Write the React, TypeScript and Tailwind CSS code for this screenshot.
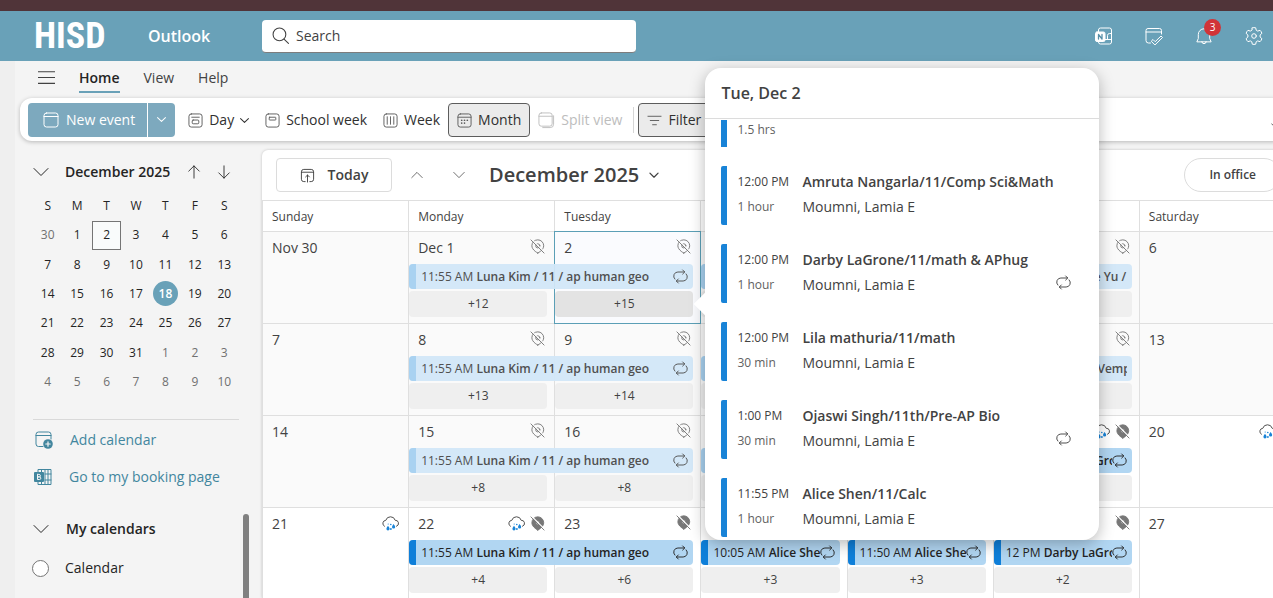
import type { ReactNode } from 'react';
import clsx from 'clsx';

/* ---------- icons ---------- */

interface IconProps {
  className?: string;
  children: ReactNode;
  box?: number;
}

function Icon({ className = 'size-4', children, box = 16 }: IconProps) {
  return (
    <svg
      viewBox={`0 0 ${box} ${box}`}
      className={clsx('shrink-0', className)}
      fill="none"
      stroke="currentColor"
      strokeWidth="1"
      strokeLinecap="round"
      strokeLinejoin="round"
      aria-hidden="true"
    >
      {children}
    </svg>
  );
}

const ChevronDown = ({ className }: { className?: string }) => (
  <Icon className={className}><path d="M1 4.5l7 7 7-7" /></Icon>
);

const ChevronUp = ({ className }: { className?: string }) => (
  <Icon className={className}><path d="M1 11.5l7-7 7 7" /></Icon>
);

// Chevron for small sizes, with a heavier line.
const SmallChevron = () => (
  <Icon className="size-[9px]"><path d="M1 4.5l7 7 7-7" strokeWidth="1.8" /></Icon>
);

const CalendarFrame = () => (
  <>
    <rect x="1" y="1" width="14" height="14" rx="2.5" />
    <path d="M1 4.5h14" />
  </>
);

const TOOL_ICON = 'size-[15px] text-[#5c5c5c]';

const DayIcon = () => (
  <Icon className={TOOL_ICON}>
    <rect x="1" y="1" width="14" height="14" rx="2.5" />
    <path d="M4 4.5h8" />
    <rect x="4.5" y="7.5" width="7" height="4" rx="1" />
  </Icon>
);

const SchoolWeekIcon = () => (
  <Icon className={TOOL_ICON}>
    <rect x="1" y="1" width="14" height="14" rx="2.5" />
    <rect x="4.5" y="4.5" width="7" height="3" rx="0.5" />
  </Icon>
);

const WeekIcon = () => (
  <Icon className={TOOL_ICON}>
    <rect x="1" y="1" width="14" height="14" rx="2.5" />
    <path d="M4.5 4v8M8 4v8M11.5 4v8" />
  </Icon>
);

const MonthIcon = () => (
  <Icon className={TOOL_ICON}>
    <CalendarFrame />
    <g fill="currentColor" stroke="none">
      <circle cx="5" cy="10.7" r="0.9" />
      <circle cx="8" cy="7.7" r="0.9" />
      <circle cx="8" cy="10.7" r="0.9" />
      <circle cx="11" cy="7.7" r="0.9" />
      <circle cx="5" cy="7.7" r="0.9" />
    </g>
  </Icon>
);

const SplitIcon = () => (
  <Icon className="size-[17px]" box={18}>
    <rect x="1" y="1" width="14" height="14" rx="2.5" />
    <path d="M1 4.5h14M16.5 4v9a3.5 3.5 0 0 1-3.5 3.5H5" />
  </Icon>
);

const FilterIcon = () => (
  <Icon className="size-[15px] text-[#5c5c5c]"><path d="M1 3.5h14M3.5 8h9M6 12.5h4" /></Icon>
);

const TodayIcon = () => (
  <Icon className="size-[15px]">
    <path d="M5.5 14.5H4A2.5 2.5 0 0 1 1.5 12V4A2.5 2.5 0 0 1 4 1.5h8A2.5 2.5 0 0 1 14.5 4v8a2.5 2.5 0 0 1-2.5 2.5h-1.5M1.5 4.5h13" />
    <path d="M8 15V7.5M6 9.5l2-2 2 2" />
  </Icon>
);

const RepeatIcon = ({ className }: { className?: string }) => (
  <Icon className={clsx('size-[15px]', className)}>
    <path d="M10.300 1l2.200 2.200-2.200 2.200M12.300 3.200H5.200A4.500 4.500 0 0 0 2 10.800" />
    <path d="M5.700 15l-2.200-2.200 2.200-2.200M3.700 12.800h7.100A4.500 4.500 0 0 0 14 5.200" />
  </Icon>
);

// Location switched off; filled for days that are still to come.
const PinOffIcon = ({ filled }: { filled?: boolean }) => (
  <Icon className="size-[15px] text-[#777777]">
    <path
      d="M8.300 15q-1.500-.8-2.700-1.800C3.200 11.300 2 9.300 2 7.200a6.300 6.300 0 0 1 12.600 0c0 2.100-1.200 4.100-3.600 6Q9.800 14.200 8.300 15z"
      fill={filled ? 'currentColor' : 'none'}
    />
    <circle cx="8.300" cy="7.300" r="2.200" fill={filled ? '#c8c8c8' : 'none'} />
    <path d="M2.500 1l13 13" stroke={filled ? '#fff' : '#fafafa'} strokeWidth="1.300" />
    <path d="M1 1l14 14" />
  </Icon>
);

const RainIcon = () => (
  <Icon className="size-[17px] text-[#505050]" box={17}>
    <path d="M2.500 11.300A3.200 3.200 0 0 1 3.800 5.300a4.900 4.900 0 0 1 9.400 0 3.100 3.100 0 0 1 1.300 6" />
    <g fill="#1883d7" stroke="none">
      <path d="M6 10.800q1.600 2 1.600 3a1.600 1.600 0 0 1-3.200 0q0-1 1.600-3zM11.600 9q1.600 2 1.600 3a1.600 1.600 0 0 1-3.200 0q0-1 1.600-3z" />
      <circle cx="8.800" cy="9.500" r="0.800" />
      <circle cx="8.900" cy="14" r="0.900" />
      <circle cx="6.200" cy="9" r="0.600" />
    </g>
  </Icon>
);

/* ---------- top bar ---------- */

function TopBar() {
  return (
    <header className="flex h-[50px] items-center bg-[#69a1b8] text-white">
      <a href="#home" aria-label="HISD home" className="ml-[34px] w-[114px] font-['Liberation_Sans_Narrow','Roboto_Condensed','Open_Sans',sans-serif] text-4xl leading-[50px] font-bold">
        HISD
      </a>
      <a href="#outlook" className="w-[114px] text-base font-semibold">Outlook</a>
      <label className="flex h-[33px] w-[374px] items-center gap-[7px] rounded border-b border-[#7d7d7d] bg-white pl-[10px] text-[#424242]">
        <Icon className="size-[17px]">
          <circle cx="7" cy="7" r="6" />
          <path d="M11.300 11.300L15.500 15.500" />
        </Icon>
        <input
          type="search"
          aria-label="Search"
          placeholder="Search"
          className="min-w-0 flex-1 bg-transparent text-sm outline-none placeholder:text-[#424242]"
        />
      </label>
      <nav className="ml-auto flex items-center gap-8 pr-[10px]">
        <button type="button" aria-label="OneNote feed">
          <Icon className="size-[18px]" box={18}>
            <path d="M3.500 5V3A2 2 0 0 1 5.500 1h9A2 2 0 0 1 16.500 3v12a2 2 0 0 1-2 2h-9a2 2 0 0 1-2-2v-1M9 12.500h7.500M16.500 6.500h-2a2 2 0 0 0-2 2v4" />
            <rect x="0.500" y="5" width="9.500" height="9.500" rx="1.500" fill="#fff" />
            <path d="M3.500 12V7.500l3.500 4.500V7.500" stroke="#5890a8" strokeWidth="1.300" />
          </Icon>
        </button>
        <button type="button" aria-label="My day">
          <Icon className="size-[18px]" box={18}>
            <path d="M5.500 16H3.500A2.500 2.500 0 0 1 1 13.500v-10A2 2 0 0 1 3 1.500h11.500A2 2 0 0 1 16.500 3.500V7M1 5h15.500" />
            <path d="M6.500 14l1.500-1.500 2.200 2.200 5.800-5.700 1.500 1.500-7.300 7.200z" />
          </Icon>
        </button>
        <button type="button" aria-label="Notifications" className="relative">
          <Icon className="size-[18px]" box={18}>
            <path d="M2 14.500l1.300-3V7.500a5.700 5.700 0 0 1 11.400 0v4l1.300 3zM6.800 14.500a2.200 2.200 0 0 0 4.400 0" />
          </Icon>
          <span className="absolute -top-2 left-[9px] flex size-[17px] items-center justify-center rounded-full bg-[#d13438] text-[10px]">3</span>
        </button>
        <button type="button" aria-label="Settings">
          <Icon className="size-[18px]" box={18}>
            <circle cx="9" cy="9" r="2.300" />
            <path d="M7.300 .8Q9 .4 10.700 .8l.5 2.400 1.500.9 2.300-.8q1.400 1.300 1.900 3l-1.800 1.700v2l1.800 1.700q-.5 1.700-1.900 3l-2.300-.8-1.500.9-.5 2.400Q9 17.600 7.300 17.200l-.5-2.400-1.500-.9-2.300.8q-1.400-1.300-1.900-3l1.800-1.700V8L1.100 6.300q.5-1.700 1.900-3l2.300.8 1.500-.9z" />
          </Icon>
        </button>
      </nav>
    </header>
  );
}

/* ---------- ribbon ---------- */

interface ToolButtonProps {
  icon: ReactNode;
  label: string;
  active?: boolean;
  disabled?: boolean;
  menu?: boolean;
}

function ToolButton({ icon, label, active, disabled, menu }: ToolButtonProps) {
  return (
    <button
      type="button"
      disabled={disabled}
      className={clsx(
        'flex h-[34px] items-center gap-[6px] px-2 pt-px whitespace-nowrap',
        active && 'rounded border border-[#5c5c5c] bg-[#ebebeb]',
        disabled ? 'text-[#bdbdbd]' : 'text-[#303030]',
      )}
    >
      {icon}
      {label}
      {menu && <SmallChevron />}
    </button>
  );
}

function Ribbon() {
  return (
    <>
      <nav className="flex h-[37px] items-start gap-6 pl-[23px] text-sm text-[#424242]">
        <button type="button" aria-label="Toggle navigation" className="flex h-8 items-center">
          <Icon className="size-[17px]"><path d="M0 2.500h16M0 8h16M0 13.500h16" /></Icon>
        </button>
        <a href="#home" className="flex h-8 items-center border-b-2 border-[#69a1b8] pt-1 font-semibold text-[#242424]">Home</a>
        <a href="#view" className="flex h-8 items-center border-b-2 border-transparent pt-1">View</a>
        <a href="#help" className="flex h-8 items-center border-b-2 border-transparent pt-1">Help</a>
      </nav>
      <div className="-mr-3 ml-[5px] flex h-[43px] items-center rounded-xl bg-white pr-1 pl-2 text-sm shadow-[0_1px_4px_rgba(0,0,0,0.25)]">
        <div className="mr-[5px] flex h-[34px] overflow-hidden rounded bg-[#7da9be] text-white">
          <button type="button" className="flex items-center gap-[7px] pt-px pr-[12px] pl-[15px] whitespace-nowrap">
            <Icon><CalendarFrame /></Icon>
            New event
          </button>
          <button type="button" aria-label="More new items" className="flex w-7 items-center justify-center border-l border-white">
            <SmallChevron />
          </button>
        </div>
        <ToolButton icon={<DayIcon />} label="Day" menu />
        <ToolButton icon={<SchoolWeekIcon />} label="School week" />
        <ToolButton icon={<WeekIcon />} label="Week" />
        <ToolButton icon={<MonthIcon />} label="Month" active />
        <ToolButton icon={<SplitIcon />} label="Split view" disabled />
        <span className="mr-1 ml-[3px] h-[26px] w-px bg-[#d6d6d6]" />
        <ToolButton icon={<FilterIcon />} label="Filter" active menu />
        <button type="button" aria-label="Ribbon options" className="mt-3 ml-auto">
          <ChevronDown className="size-[10px]" />
        </button>
      </div>
    </>
  );
}

/* ---------- sidebar ---------- */

const WEEK_LETTERS = ['S', 'M', 'T', 'W', 'T', 'F', 'S'];
const MINI_DAYS = [30, ...Array.from({ length: 31 }, (_, i) => i + 1), ...Array.from({ length: 10 }, (_, i) => i + 1)];

function Sidebar() {
  return (
    <aside className="relative w-[247px] shrink-0 pr-[23px] pl-[18px] text-[#242424]">
      <div className="flex h-[41px] items-center pt-[2px]">
        <button type="button" aria-label="Collapse calendar"><ChevronDown className="size-4" /></button>
        <h2 className="ml-4 text-sm font-semibold">December 2025</h2>
        <button type="button" aria-label="Previous month" className="ml-auto">
          <Icon className="size-[14px]"><path d="M8 15V1M2 7l6-6 6 6" /></Icon>
        </button>
        <button type="button" aria-label="Next month" className="mr-2 ml-4">
          <Icon className="size-[14px]"><path d="M8 1v14M2 9l6 6 6-6" /></Icon>
        </button>
      </div>
      <div className="grid h-[206px] grid-cols-7 grid-rows-7 place-items-center text-xs">
        {WEEK_LETTERS.map((d, i) => <span key={i}>{d}</span>)}
        {MINI_DAYS.map((day, i) => (
          <button
            key={i}
            type="button"
            className={clsx(
              'flex items-center justify-center',
              i === 2 ? 'size-[29px] border border-[#757575] bg-[#f9fbfb]' : 'size-[25px]',
              i === 18 && 'rounded-full bg-[#69a1b8] font-semibold text-white',
              (i === 0 || i > 31) && 'text-[#707070]',
            )}
          >
            {day}
          </button>
        ))}
      </div>
      <div className="mt-[22px] border-t border-[#d9d9d9] text-sm text-[#42869e]">
        <button type="button" className="flex h-10 items-center gap-[17px] pl-[2px]">
          <Icon className="size-[18px]" box={18}>
            <path d="M8 15.500H3.500A2.500 2.500 0 0 1 1 13V3.500A2.500 2.500 0 0 1 3.500 1h10A2.500 2.500 0 0 1 16 3.500V8M1 4.500h15" />
            <circle cx="13" cy="13" r="4.800" fill="currentColor" stroke="none" />
            <path d="M13 10.800v4.400M10.800 13h4.400" stroke="#f4f4f4" strokeWidth="1.200" />
          </Icon>
          Add calendar
        </button>
        <a href="#booking" className="flex h-[34px] items-center gap-[17px] pl-px">
          <Icon className="size-[18px]" box={18}>
            <path d="M4 4V1.500h13v15H4V14M11 1.500v15M14 1.500v15M7.500 1.500V4M7.500 14v2.500M11 6h6M11 12h6" />
            <rect x="0" y="4" width="10" height="10" rx="1" fill="currentColor" stroke="none" />
            <path d="M3.500 6.500v5h2a1.300 1.300 0 0 0 0-2.600h-2 1.800a1.200 1.200 0 0 0 0-2.400z" stroke="#f4f4f4" />
          </Icon>
          Go to my booking page
        </a>
      </div>
      <div className="mt-[15px] text-sm">
        <h3 className="flex h-10 items-center gap-[17px] font-semibold">
          <button type="button" aria-label="Collapse my calendars"><ChevronDown className="size-4" /></button>
          My calendars
        </h3>
        <label className="flex h-[38px] items-center gap-4">
          <input type="checkbox" className="-ml-px size-[17px] appearance-none rounded-full border border-[#757575] bg-white" />
          Calendar
        </label>
      </div>
      <div className="absolute top-[364px] right-[13px] bottom-0 w-[6px] rounded-t-full bg-[#808080]" />
    </aside>
  );
}

/* ---------- month grid ---------- */

const WEEKDAYS = ['Sunday', 'Monday', 'Tuesday', 'Wednesday', 'Thursday', 'Friday', 'Saturday'];
const COL_START = ['col-start-1', 'col-start-2', 'col-start-3', 'col-start-4', 'col-start-5', 'col-start-6', 'col-start-7'];

interface CalendarEvent {
  col: number;
  wide?: boolean;
  time: string;
  title: string;
  repeat?: boolean;
  upcoming?: boolean;
}

interface Week {
  labels: string[];
  rain: number[];
  upcomingFrom: number;
  events: CalendarEvent[];
  more: number[];
}

const luna = { col: 1, wide: true, time: '11:55 AM', title: 'Luna Kim / 11 / ap human geo', repeat: true };
const alice = { col: 3, time: '10:05 AM', title: 'Alice Shen/11/Calc', repeat: true };
const darby = { col: 5, time: '12 PM', title: 'Darby LaGrone/11', repeat: true };

const WEEKS: Week[] = [
  {
    labels: ['Nov 30', 'Dec 1', '2', '3', '4', '5', '6'],
    rain: [],
    upcomingFrom: 7,
    events: [luna, { ...alice, wide: true }, { col: 5, time: '12 PM', title: 'Catherine Yu / 11' }],
    more: [12, 15, 12, 14, 9],
  },
  {
    labels: ['7', '8', '9', '10', '11', '12', '13'],
    rain: [],
    upcomingFrom: 7,
    events: [luna, { ...alice, wide: true }, { col: 5, time: '12 PM', title: 'Srivithya Vempati' }],
    more: [13, 14, 12, 10, 9],
  },
  {
    labels: ['14', '15', '16', '17', '18', '19', '20'],
    rain: [5, 6],
    upcomingFrom: 4,
    events: [luna, { ...alice, wide: true }, { ...darby, upcoming: true }],
    more: [8, 8, 6, 5, 4],
  },
  {
    labels: ['21', '22', '23', '24', '25', '26', '27'],
    rain: [0, 1],
    upcomingFrom: 0,
    events: [
      { ...luna, upcoming: true },
      { ...alice, upcoming: true },
      { col: 4, time: '11:50 AM', title: 'Alice Shen/11/Calc', repeat: true, upcoming: true },
      { ...darby, upcoming: true },
    ],
    more: [4, 6, 3, 3, 2],
  },
];

function EventBar({ event }: { event: CalendarEvent }) {
  const { col, wide, time, title, repeat, upcoming } = event;
  return (
    <button
      type="button"
      className={clsx(
        'z-10 row-start-2 mr-[7px] ml-px flex h-[25px] min-w-0 items-center overflow-hidden rounded pr-[5px] text-left text-xs whitespace-nowrap',
        COL_START[col],
        wide && 'col-span-2',
        upcoming ? 'bg-[#add4f1]/95 text-[#242424]' : 'bg-[#d2e7f8]/95 text-[#505050]',
      )}
    >
      <span className={clsx('mr-[5px] h-full w-[7px] shrink-0', upcoming ? 'bg-[#0f7fd9]' : 'bg-[#a9d2f1]')} />
      <span className="min-w-0 flex-1 overflow-hidden">
        {time} <span className="font-semibold">{title}</span>
      </span>
      {repeat && <RepeatIcon />}
    </button>
  );
}

function WeekRow({ week, first }: { week: Week; first: boolean }) {
  return (
    <div className="grid min-h-[92px] grid-cols-7 grid-rows-[33px_25px_1fr]">
      {week.labels.map((label, i) => {
        const weekday = i > 0 && i < 6;
        const upcoming = i >= week.upcomingFrom;
        const selected = first && i === 2;
        return (
          <div
            key={label}
            className={clsx(
              'row-span-3 row-start-1 flex items-start justify-between border-t border-l pt-[6px] pr-[9px] pl-[9px]',
              COL_START[i],
              selected
                ? 'z-[1] -mr-px -mb-px border-r border-b border-[#5b9fb6] bg-[#fafbfe]'
                : clsx('border-[#dfdfdf]', upcoming ? 'bg-white' : 'bg-[#fafafa]'),
            )}
          >
            <span className="text-sm text-[#424242]">{label}</span>
            <span className="flex items-center gap-[5px] pt-px">
              {week.rain.includes(i) && <RainIcon />}
              {weekday && <PinOffIcon filled={upcoming} />}
            </span>
          </div>
        );
      })}
      {week.events.map((event) => <EventBar key={event.col} event={event} />)}
      {week.more.map((count, i) => (
        <button
          key={i}
          type="button"
          className={clsx(
            'z-10 row-start-3 mt-[2px] mr-[7px] ml-px h-[26px] rounded text-xs text-[#424242]',
            COL_START[i + 1],
            first && i === 1 ? 'bg-[#e3e3e3]' : 'bg-[#efefef]',
          )}
        >
          +{count}
        </button>
      ))}
    </div>
  );
}

/* ---------- day popover ---------- */

interface AgendaItem {
  time: string;
  length: string;
  title: string;
  repeat?: boolean;
}

const AGENDA: AgendaItem[] = [
  { time: '12:00 PM', length: '1 hour', title: 'Amruta Nangarla/11/Comp Sci&Math' },
  { time: '12:00 PM', length: '1 hour', title: 'Darby LaGrone/11/math & APhug', repeat: true },
  { time: '12:00 PM', length: '30 min', title: 'Lila mathuria/11/math' },
  { time: '1:00 PM', length: '30 min', title: 'Ojaswi Singh/11th/Pre-AP Bio', repeat: true },
  { time: '11:55 PM', length: '1 hour', title: 'Alice Shen/11/Calc' },
];

function DayPopover() {
  return (
    <div
      role="dialog"
      aria-label="Tue, Dec 2"
      className="absolute -top-[82px] left-[calc(300%/7+5px)] z-20 w-[394px] rounded-2xl bg-white pb-[3px] text-[#424242] shadow-[0_4px_16px_rgba(0,0,0,0.28)]"
    >
      <span className="absolute top-[228px] -left-2 size-4 rotate-45 bg-white" />
      <h2 className="flex h-[51px] items-center border-b border-[#dcdcdc] pl-4 text-base font-semibold">Tue, Dec 2</h2>
      <ul className="relative flex flex-col gap-[19px] pt-px pl-4">
        <li className="flex h-[27px] border-l-[6px] border-[#1883d7] pl-[10px] text-xs leading-5 text-[#616161]">1.5 hrs</li>
        {AGENDA.map((item) => (
          <li key={item.title} className="flex h-[59px] rounded-xs border-l-[6px] border-[#1883d7] pt-[3px] pl-[10px]">
            <div className="w-[65px] shrink-0 text-xs leading-[25px]">
              <p>{item.time}</p>
              <p className="text-[#616161]">{item.length}</p>
            </div>
            <div className="min-w-0 flex-1 text-sm leading-[25px]">
              <p className="truncate font-semibold">{item.title}</p>
              <p>Moumni, Lamia E</p>
            </div>
            {item.repeat && <RepeatIcon className="mt-7 mr-7" />}
          </li>
        ))}
      </ul>
    </div>
  );
}

function MonthView() {
  return (
    <main className="relative -mr-3 min-w-0 flex-1 rounded-tl-md bg-white shadow-[0_0_3px_rgba(0,0,0,0.2)]">
      <div className="flex h-[50px] items-center pr-1 pl-[14px] text-[#424242]">
        <button type="button" className="flex h-[34px] w-[116px] items-center justify-center gap-[13px] rounded border border-[#dcdcdc] text-sm font-semibold">
          <TodayIcon />
          Today
        </button>
        <button type="button" aria-label="Previous" className="ml-[19px]"><ChevronUp className="size-3" /></button>
        <button type="button" aria-label="Next" className="ml-[30px]"><ChevronDown className="size-3" /></button>
        <button type="button" className="ml-6 flex items-center gap-[10px] text-xl font-semibold">
          December 2025
          <Icon className="size-[10px]"><path d="M1.500 5l6.500 6.500L14.500 5" strokeWidth="2" /></Icon>
        </button>
        <button type="button" className="ml-auto h-[34px] rounded-full border border-[#dcdcdc] px-6 text-xs font-semibold">In office</button>
      </div>
      <div className="grid h-[31px] grid-cols-7 border-t border-[#dfdfdf] text-xs text-[#424242]">
        {WEEKDAYS.map((day) => (
          <div key={day} className="flex items-center border-l border-[#dfdfdf] pt-px pl-[9px]">{day}</div>
        ))}
      </div>
      {WEEKS.map((week, i) => <WeekRow key={i} week={week} first={i === 0} />)}
      <DayPopover />
    </main>
  );
}

export default function App() {
  return (
    <div className="flex h-screen flex-col overflow-hidden bg-[#f4f4f4] font-['Open_Sans','Noto_Sans',sans-serif]">
      <div className="h-[11px] shrink-0 bg-[#503439]" />
      <TopBar />
      <div className="flex min-h-0 flex-1">
        <div className="w-[15px] shrink-0 bg-[#efefef]" />
        <div className="flex min-w-0 flex-1 flex-col">
          <Ribbon />
          <div className="mt-[9px] flex min-h-0 flex-1">
            <Sidebar />
            <MonthView />
          </div>
        </div>
      </div>
    </div>
  );
}
